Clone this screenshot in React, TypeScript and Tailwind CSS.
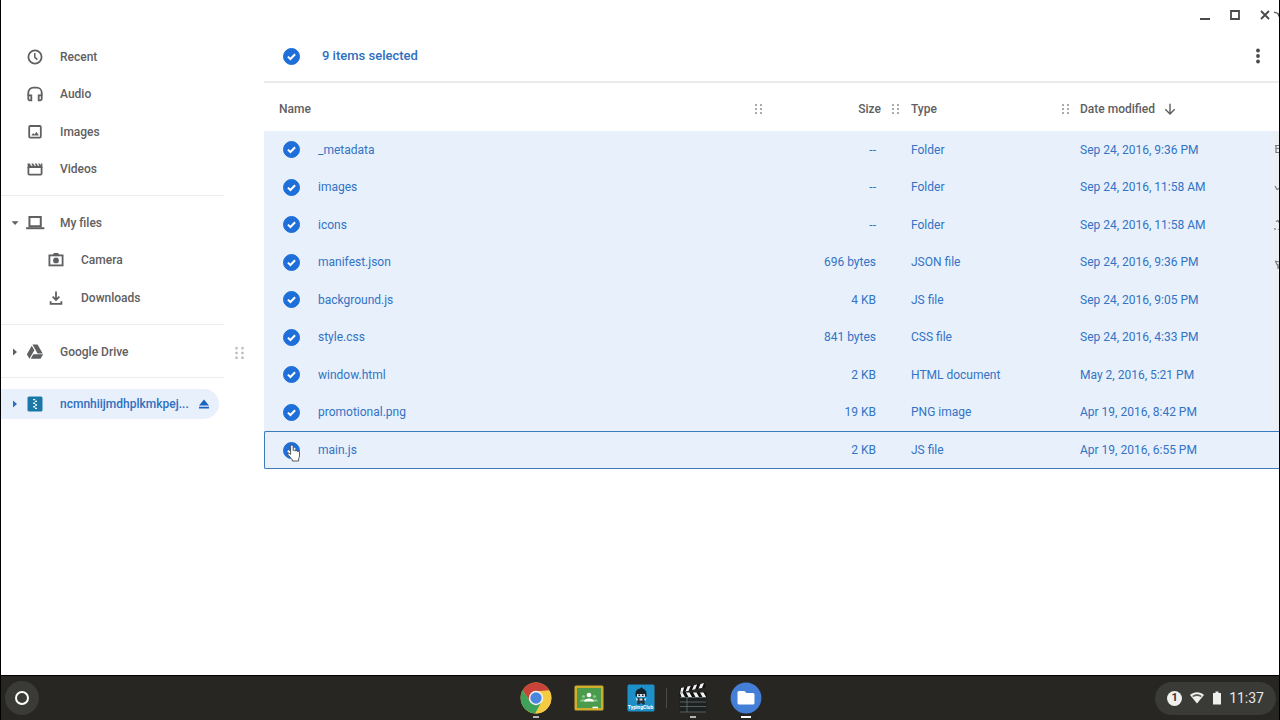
import { useState, type ReactNode } from "react";

type FileRow = {
  name: string;
  size: string;
  type: string;
  modified: string;
};

const files: FileRow[] = [
  { name: "_metadata", size: "--", type: "Folder", modified: "Sep 24, 2016, 9:36 PM" },
  { name: "images", size: "--", type: "Folder", modified: "Sep 24, 2016, 11:58 AM" },
  { name: "icons", size: "--", type: "Folder", modified: "Sep 24, 2016, 11:58 AM" },
  { name: "manifest.json", size: "696 bytes", type: "JSON file", modified: "Sep 24, 2016, 9:36 PM" },
  { name: "background.js", size: "4 KB", type: "JS file", modified: "Sep 24, 2016, 9:05 PM" },
  { name: "style.css", size: "841 bytes", type: "CSS file", modified: "Sep 24, 2016, 4:33 PM" },
  { name: "window.html", size: "2 KB", type: "HTML document", modified: "May 2, 2016, 5:21 PM" },
  { name: "promotional.png", size: "19 KB", type: "PNG image", modified: "Apr 19, 2016, 8:42 PM" },
  { name: "main.js", size: "2 KB", type: "JS file", modified: "Apr 19, 2016, 6:55 PM" },
];

function Icon({ children, className = "size-[18px]" }: { children: ReactNode; className?: string }) {
  return (
    <svg
      viewBox="0 0 18 18"
      className={`${className} shrink-0`}
      fill="none"
      stroke="currentColor"
      strokeWidth="1.8"
      aria-hidden="true"
    >
      {children}
    </svg>
  );
}

const icons = {
  recent: (
    <Icon>
      <circle cx="9" cy="9" r="6.6" />
      <path d="M8.8 5v4.4l2.6 2.2" strokeWidth="1.5" />
    </Icon>
  ),
  audio: (
    <Icon>
      <path d="M2.3 10.5V7.6a5 5 0 0 1 5-5h3.4a5 5 0 0 1 5 5v2.9" />
      <path d="M2.3 10.3h3v5h-1.5a1.5 1.5 0 0 1-1.5-1.5zM15.7 10.3h-3v5h1.5a1.5 1.5 0 0 0 1.5-1.5z" />
    </Icon>
  ),
  images: (
    <Icon>
      <rect x="3.2" y="3" width="11.6" height="11.6" rx="1" />
      <path d="M5.4 12.4l1.8-2.3 1.3 1.4 2-2.8 2.4 3.7z" fill="currentColor" stroke="none" />
    </Icon>
  ),
  videos: (
    <Icon>
      <path d="M2.4 7v6.6a1 1 0 0 0 1 1h11.2a1 1 0 0 0 1-1V7" />
      <path
        d="M1.6 3.4l2.2 0 1.3 2.4h1.5L5.3 3.4h1.9l1.3 2.4H10L8.7 3.4h1.9l1.3 2.4h1.5l-1.3-2.4h1.5l1.2 2.2V3.4h1.6V8H1.6z"
        fill="currentColor"
        stroke="none"
      />
    </Icon>
  ),
  computer: (
    <Icon className="size-5">
      <path d="M4 3.5h10.2v8.4H4z" />
      <path d="M1 13.7h16.4" />
    </Icon>
  ),
  camera: (
    <Icon>
      <rect x="2.4" y="4.4" width="13.2" height="10" />
      <path d="M5.6 4.2l1.2-2.2h4.4l1.2 2.2z" fill="currentColor" stroke="none" />
      <circle cx="9" cy="9.4" r="2.9" fill="currentColor" stroke="none" />
    </Icon>
  ),
  downloads: (
    <Icon>
      <path d="M9 2.6v8.2M5.6 7.6L9 11l3.4-3.4M3.6 12.2v2.6h10.8v-2.6" />
    </Icon>
  ),
  drive: (
    <svg viewBox="0 0 24 24" className="size-[18px] shrink-0" fill="currentColor" aria-hidden="true">
      <path d="M7.71 3.5L1.15 15l3.43 6 6.55-11.5M9.73 15L6.3 21h13.12l3.43-6m-.58-1L15.42 2H8.58l6.86 12z" />
    </svg>
  ),
  archive: (
    <Icon>
      <rect x="1.5" y="1.5" width="15" height="15" rx="1.5" fill="#1a78a8" stroke="none" />
      <path d="M7.2 4.6h2M9 6.4h2M7.2 8.2h2M9 10h2M7.2 11.8h2M9 13.4h2" stroke="#fff" strokeWidth="1.4" />
    </Icon>
  ),
};

function Arrow({ open = false }: { open?: boolean }) {
  return (
    <svg viewBox="0 0 8 8" className="size-2 shrink-0" fill="currentColor" aria-hidden="true">
      {open ? <path d="M.6 2.2h7L4.1 6z" /> : <path d="M2 .4v7.2L6 4z" />}
    </svg>
  );
}

function Dots({ className = "h-[10px] w-[7px] text-[#a5a5a5]" }: { className?: string }) {
  return (
    <svg viewBox="0 0 7 10" className={`${className} shrink-0`} fill="currentColor" aria-hidden="true">
      {[0, 4, 8].map((y) => (
        <g key={y}>
          <rect x="0" y={y} width="2" height="2" rx=".5" />
          <rect x="5" y={y} width="2" height="2" rx=".5" />
        </g>
      ))}
    </svg>
  );
}

function NavItem({ icon, label, nested = false }: { icon: ReactNode; label: string; nested?: boolean }) {
  return (
    <button className={`flex items-center gap-4 text-left ${nested ? "pl-[46px]" : "pl-[25px]"}`}>
      {icon}
      {label}
    </button>
  );
}

function Sidebar() {
  return (
    <nav className="w-[223px] shrink-0 pt-2 text-[12px] leading-5 font-medium text-[#5f6062]">
      <div className="grid h-[150px] grid-rows-4">
        <NavItem icon={icons.recent} label="Recent" />
        <NavItem icon={icons.audio} label="Audio" />
        <NavItem icon={icons.images} label="Images" />
        <NavItem icon={icons.videos} label="Videos" />
      </div>
      <hr className="mt-[7px] mb-2 border-[#ececec]" />
      <div className="grid h-[113px] grid-rows-3">
        <button className="flex items-center pl-[10px] text-left" aria-expanded="true">
          <Arrow open />
          <span className="mr-[15px] ml-[6px]">{icons.computer}</span>
          My files
        </button>
        <NavItem icon={icons.camera} label="Camera" nested />
        <NavItem icon={icons.downloads} label="Downloads" nested />
      </div>
      <hr className="mt-[7px] mb-2 border-[#ececec]" />
      <button className="flex h-[38px] w-full items-center pl-[10px] text-left" aria-expanded="false">
        <Arrow />
        <span className="mr-4 ml-[7px]">{icons.drive}</span>
        Google Drive
      </button>
      <hr className="mt-[6px] mb-[11px] border-[#ececec]" />
      <div className="mr-[5px] flex h-[30px] items-center rounded-r-full bg-[#e8f0fb] pr-[9px] text-[#2f6fc0]">
        <button className="flex min-w-0 flex-1 items-center pl-[10px] text-left" aria-expanded="false">
          <Arrow />
          <span className="mr-4 ml-[7px]">{icons.archive}</span>
          <span className="truncate">ncmnhiijmdhplkmkpej...</span>
        </button>
        <button aria-label="Eject" className="text-[#1a62c0]">
          <svg viewBox="0 0 12 12" className="size-3" fill="currentColor">
            <path d="M6 1.4L11 7.4H1zM1 8.8h10v1.8H1z" />
          </svg>
        </button>
      </div>
    </nav>
  );
}

function Check({ label, checked, onChange }: { label: string; checked: boolean; onChange: () => void }) {
  return (
    <label className="relative flex size-[17px] items-center justify-center">
      <input
        type="checkbox"
        aria-label={label}
        checked={checked}
        onChange={onChange}
        className="peer size-[17px] appearance-none rounded-full border border-[#1e6fd9] checked:bg-[#1e6fd9]"
      />
      <svg
        viewBox="0 0 17 17"
        className="pointer-events-none absolute inset-0 hidden size-[17px] peer-checked:block"
        fill="none"
        stroke="#fff"
        strokeWidth="2"
      >
        <path d="M4.9 8.6l2.5 2.4 4.7-4.8" />
      </svg>
    </label>
  );
}

function HandCursor() {
  return (
    <svg
      viewBox="0 0 14 18"
      className="pointer-events-none absolute top-3 left-[22px] h-[18px] w-[14px]"
      aria-hidden="true"
    >
      <path
        d="M3.6 10.4V2.2a1.3 1.3 0 0 1 2.6 0v4.3c.6-.6 1.9-.5 2.2.4.7-.5 1.9-.3 2.1.6.9-.4 2 .1 2 1.2v3.2c0 1.2-.9 2.3-.9 3.2V17H5.3v-1.2C4.4 14.5 2.2 12.2 1 10.7c-.8-1.2.6-2 1.5-1.2z"
        fill="#fff"
        stroke="#4b4b4b"
        strokeWidth=".9"
      />
    </svg>
  );
}

function FileTable({ selected, toggle }: { selected: boolean[]; toggle: (i: number) => void }) {
  return (
    <table className="w-full table-fixed border-separate border-spacing-0 text-left text-[12px] leading-5">
      <colgroup>
        <col className="w-[54px]" />
        <col />
        <col className="w-[137px]" />
        <col className="w-[170px]" />
        <col className="w-[210px]" />
      </colgroup>
      <thead className="text-[#5f6062]">
        <tr className="h-12 [&>th]:p-0 [&>th]:font-medium">
          <th colSpan={2}>
            <div className="flex items-center justify-between pt-[3px] pl-[15px]">
              Name <Dots />
            </div>
          </th>
          <th>
            <div className="flex items-center justify-end gap-[11px] pt-[3px]">
              Size <Dots />
            </div>
          </th>
          <th>
            <div className="flex items-center justify-between pt-[3px] pl-3">
              Type <Dots />
            </div>
          </th>
          <th>
            <button className="flex items-center gap-[9px] pt-[3px] pl-[11px]">
              Date modified
              <svg viewBox="0 0 12 12" className="size-3" fill="none" stroke="currentColor" strokeWidth="1.4">
                <path d="M6 .8v10M1.3 6.3L6 11l4.7-4.7" />
              </svg>
            </button>
          </th>
        </tr>
      </thead>
      <tbody className="text-[#3273c5]">
        {files.map((file, i) => {
          const last = i === files.length - 1;
          return (
            <tr
              key={file.name}
              className={
                last
                  ? "h-[38px] bg-[#e8f0fb] [&>td]:border-y [&>td]:border-[#3c7bbd] [&>td]:p-0 [&>td:first-child]:rounded-l-xs [&>td:first-child]:border-l"
                  : "h-[37px] bg-[#e8f0fb] even:h-[38px] [&>td]:p-0"
              }
            >
              <td className="relative">
                <div className={last ? "pl-[18px]" : "pl-[19px]"}>
                  <Check label={`Select ${file.name}`} checked={selected[i]} onChange={() => toggle(i)} />
                </div>
                {last && <HandCursor />}
              </td>
              <td className="truncate">{file.name}</td>
              <td>
                <div className="pr-[23px] text-right">{file.size}</div>
              </td>
              <td>
                <div className="pl-3">{file.type}</div>
              </td>
              <td>
                <div className="pl-[11px]">{file.modified}</div>
              </td>
            </tr>
          );
        })}
      </tbody>
    </table>
  );
}

function WindowControls() {
  return (
    <div className="flex h-[30px] items-center justify-end gap-4 pr-[7px] text-[#4a4a4a]">
      <button aria-label="Minimize">
        <svg viewBox="0 0 14 14" className="size-[14px]" stroke="currentColor" strokeWidth="2">
          <path d="M2 11h10" />
        </svg>
      </button>
      <button aria-label="Maximize">
        <svg viewBox="0 0 14 14" className="size-[14px]" fill="none" stroke="currentColor" strokeWidth="1.8">
          <path d="M3 3h8v8H3z" />
        </svg>
      </button>
      <button aria-label="Close">
        <svg viewBox="0 0 14 14" className="size-[14px]" stroke="currentColor" strokeWidth="1.8">
          <path d="M3 3l8 8M11 3l-8 8" />
        </svg>
      </button>
    </div>
  );
}

/* sliver of the window behind, showing past the right edge */
function EdgeStrip() {
  return (
    <div className="pointer-events-none absolute top-0 right-0 w-[5px]" aria-hidden="true">
      <svg viewBox="0 0 5 432" className="h-[432px] w-[5px]" fill="none" stroke="#777a80" strokeWidth="1.2">
        <path d="M0 131h5v300H0z" fill="#ebeef3" stroke="none" />
        <path d="M0 12l4 1.5 1 3" stroke="#555" strokeWidth="1.3" />
        <path d="M1 145.5h4M1.5 148.5H5M2 145v8M2 152.5h3" />
        <path d="M1 186l2 3.500 2-1" />
        <path d="M2 221.5l2-1 1 2M1 228v2M4 229.5h1" />
        <path d="M1 261l4 1M1.5 261.5L5 268M4 264v5" />
      </svg>
    </div>
  );
}

function ChromeLogo() {
  return (
    <svg viewBox="0 0 32 32" className="size-8" aria-hidden="true">
      <circle cx="16" cy="16" r="15.4" fill="#f6cb44" />
      <path d="M2.66 8.3A15.4 15.4 0 0 1 29.34 8.3L16 9.2 10.1 19.4z" fill="#c8433a" />
      <path
        d="M2.66 8.3L10.11 19.4 16 22.8 21.89 19.4 15.3 31.38A15.4 15.4 0 0 1 2.66 8.3z"
        fill="#3fa25b"
      />
      <path d="M16 9.2h13.8A15.4 15.4 0 0 1 15.3 31.38L21.89 19.4z" fill="#f6cb44" />
      <circle cx="16" cy="16" r="7.2" fill="#f4f4f2" />
      <circle cx="16" cy="16" r="5.7" fill="#4a86e0" />
    </svg>
  );
}

function ClassroomLogo() {
  return (
    <svg viewBox="0 0 30 30" className="size-[30px]" aria-hidden="true">
      <rect x=".5" y="2.5" width="29" height="25" rx="1.5" fill="#cfae2e" />
      <rect x="3" y="5" width="24" height="20" fill="#4a9c4c" />
      <g fill="#8ec48e">
        <circle cx="9.5" cy="13.5" r="1.6" />
        <circle cx="20.5" cy="13.5" r="1.6" />
        <path d="M6 18.5c0-3 6-3 7 0zM17 18.5c1-3 7-3 7 0z" />
      </g>
      <circle cx="15" cy="12" r="2.3" fill="#fff" />
      <path d="M10 18.5c0-4 10-4 10 0z" fill="#fff" />
      <path d="M18.5 23.7h5.5v1.5h-5.5z" fill="#fff" />
    </svg>
  );
}

function TypingClubLogo() {
  return (
    <span className="relative block size-[30px]">
      <svg viewBox="0 0 30 30" className="size-[30px]" aria-hidden="true">
        <rect x="1.5" y="1.5" width="27" height="27" rx="1.5" fill="#1e90c8" />
        <path d="M14 6l1.5-2L17 6z" fill="#15232c" />
        <path d="M9.5 10a5.5 4.500 0 0 1 11 0v3.500h-11z" fill="#15232c" />
        <path d="M11 11h8v3h-8z" fill="#d5dde0" />
        <path d="M12.500 11.500h1.500v1.500h-1.500zM16 11.500h1.500v1.500H16z" fill="#15232c" />
        <path d="M12 15h6l1 6.500h-2.500L15 19.500l-1.500 2H11z" fill="#24343c" />
        <path d="M9.500 14.500l2.500 2-1.500 1.500zM20.500 14.500l-2.500 2 1.500 1.500zM13.500 15.500h3v2h-3z" fill="#d5dde0" />
      </svg>
      <span className="absolute inset-x-0 bottom-[3px] text-center text-[5px] leading-[5px] font-bold text-white">
        TypingClub
      </span>
    </span>
  );
}

function ClapperLogo() {
  return (
    <svg viewBox="0 0 30 30" className="size-[30px]" aria-hidden="true">
      <path d="M1.5 14h27v15.5h-27z" fill="#1c2021" />
      <path d="M2 14.500h26M2 19h26M2 23.500h26M9 14.500V29M2 29h26" stroke="#6a7071" strokeWidth=".8" />
      <path d="M1.500 9.500h27V14h-27z" fill="#111" />
      <path
        d="M2 9.500h2.500L7 14H3.500zM8 9.500h3.500L14 14h-3.500zM15 9.500h3.500L21 14h-3.500zM22 9.500h3.500L28 14h-3.500z"
        fill="#f3f3f3"
      />
      <path d="M1.500 5.200L26.500 0 27.500 4.200 2.500 9.500z" fill="#111" />
      <path
        d="M3 5l3.200-.8L4.700 8.900l-2.200.5zM9.500 3.600l3.200-.8-2 4.900-3.200.7zM16 2.200l3.200-.7-2 4.800-3.200.7zM22.500.9l3.500-.8-2 4.800-3.500.7z"
        fill="#f3f3f3"
      />
      <circle cx="3.500" cy="9.500" r="1.200" fill="#b8bcbe" />
    </svg>
  );
}

function FilesLogo() {
  return (
    <svg viewBox="0 0 32 32" className="size-8" aria-hidden="true">
      <circle cx="16" cy="16" r="15.4" fill="#437fd6" />
      <path
        d="M9 9h5.5l2 2H23a1.500 1.500 0 0 1 1.500 1.500V21a1.500 1.500 0 0 1-1.500 1.500H9A1.500 1.500 0 0 1 7.500 21V10.500A1.500 1.500 0 0 1 9 9z"
        fill="#fff"
      />
    </svg>
  );
}

function ShelfApp({ label, running, children }: { label: string; running?: string; children: ReactNode }) {
  return (
    <button aria-label={label} className="relative flex h-11 items-center">
      {children}
      {running && <span className={`absolute bottom-[2px] left-1/2 h-[2px] -translate-x-1/2 ${running}`} />}
    </button>
  );
}

function Shelf() {
  return (
    <footer className="grid h-[45px] grid-cols-[1fr_auto_1fr] items-center border-t border-black bg-[#272623] pr-[3px] pl-1">
      <button
        aria-label="Launcher"
        className="flex size-[34px] items-center justify-center rounded-full bg-[#3a3a37]"
      >
        <span className="size-[14px] rounded-full border-2 border-white" />
      </button>
      <div className="flex items-center gap-[22px]">
        <ShelfApp label="Chrome" running="w-[6px] bg-[#b5b5b3]">
          <ChromeLogo />
        </ShelfApp>
        <ShelfApp label="Classroom">
          <ClassroomLogo />
        </ShelfApp>
        <ShelfApp label="TypingClub">
          <TypingClubLogo />
          <span className="absolute -right-[11px] h-5 w-px bg-[#4b4a47]" />
        </ShelfApp>
        <ShelfApp label="Clapper" running="w-[6px] bg-[#b5b5b3]">
          <ClapperLogo />
        </ShelfApp>
        <ShelfApp label="Files" running="w-[10px] bg-white">
          <FilesLogo />
        </ShelfApp>
      </div>
      <button className="flex h-[33px] items-center justify-self-end rounded-full bg-[#3a3a37] px-3 text-[14px] leading-5 text-[#e8e8e6]">
        <span className="flex size-[15px] items-center justify-center rounded-full bg-[#efefed] text-[11px] font-bold text-[#333]">
          1
        </span>
        <svg viewBox="0 0 14 12" className="ml-2 h-3 w-[14px]" aria-hidden="true">
          <path d="M0 3C4-.8 10-.8 14 3L7 11.5z" fill="#efefed" />
          <path d="M2.2 4C5 1.8 9 1.8 11.8 4l-1 1.1C8.500 3.600 5.500 3.600 3.200 5.100z" fill="#5a5a57" />
        </svg>
        <svg viewBox="0 0 8 14" className="ml-[9px] h-[14px] w-2" fill="#efefed" aria-hidden="true">
          <path d="M2.5.5h3V2H8v11.500H0V2h2.500z" />
        </svg>
        <span className="ml-2">11:37</span>
      </button>
    </footer>
  );
}

export default function App() {
  const [selected, setSelected] = useState(files.map(() => true));
  const count = selected.filter(Boolean).length;

  const toggle = (i: number) => setSelected(selected.map((s, n) => (n === i ? !s : s)));
  const toggleAll = () => setSelected(files.map(() => count !== files.length));

  return (
    <div className="flex min-h-screen flex-col border-r border-l border-black bg-white font-[Roboto,sans-serif]">
      <div className="relative flex flex-1 flex-col">
        <WindowControls />
        <div className="flex flex-1">
          <Sidebar />
          <div className="flex w-10 shrink-0 items-center justify-center pr-[10px]" role="separator">
            <Dots className="h-3 w-[9px] text-[#bdbdbd]" />
          </div>
          <main className="min-w-0 flex-1">
            <div className="flex h-[53px] items-center border-b-2 border-[#eaebec] pt-px pr-[13px] pl-[19px] text-[13px] leading-5 font-medium text-[#2f6fc0]">
              <Check label="Select all" checked={count === files.length} onChange={toggleAll} />
              <span className="ml-[22px] flex-1">{count} items selected</span>
              <button aria-label="More" className="text-[#4a4a4a]">
                <svg viewBox="0 0 16 16" className="size-4" fill="currentColor">
                  <circle cx="8" cy="2.5" r="1.9" />
                  <circle cx="8" cy="8" r="1.9" />
                  <circle cx="8" cy="13.5" r="1.9" />
                </svg>
              </button>
            </div>
            <FileTable selected={selected} toggle={toggle} />
          </main>
        </div>
        <EdgeStrip />
      </div>
      <Shelf />
    </div>
  );
}
